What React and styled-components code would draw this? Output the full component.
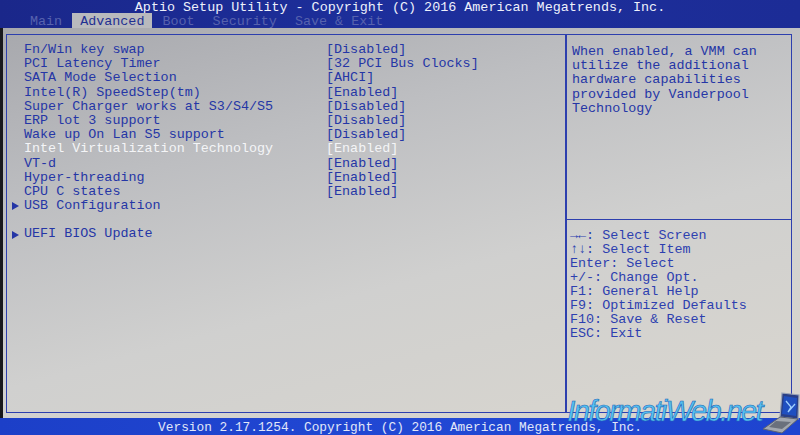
import React from "react";
import styled, { createGlobalStyle } from "styled-components";

const GlobalStyle = createGlobalStyle`
  html, body {
    margin: 0;
    padding: 0;
    background: #1a1a1e;
  }
`;

const mono = `"Liberation Mono", "DejaVu Sans Mono", monospace`;

const Screen = styled.div`
  position: relative;
  width: 800px;
  height: 435px;
  overflow: hidden;
  display: flex;
  flex-direction: column;
  font-family: ${mono};
  font-size: 13.4px;
`;

const TitleBar = styled.div`
  height: 28px;
  background: linear-gradient(90deg, #1a278a 0%, #1d2f9c 50%, #1c2c96 100%);
  display: flex;
  flex-direction: column;
`;

const Title = styled.div`
  height: 13px;
  line-height: 16px;
  text-align: center;
  color: #eef1fb;
  white-space: pre;
`;

const TabRow = styled.div`
  display: flex;
  height: 15px;
  padding-left: 22px;
  gap: 2px;
`;

const Tab = styled.div`
  padding: 0 8px;
  line-height: 17px;
  white-space: pre;
  color: ${(p) => (p.$active ? "#1f2f92" : "#5762ae")};
  background: ${(p) => (p.$active ? "#b9babd" : "transparent")};
`;

const Body = styled.div`
  flex: 1;
  display: flex;
  padding: 6px 8px 5px 3px;
  border-left: 3px solid #18181c;
  background: linear-gradient(165deg, #a7a8ad 0%, #bdbec1 30%, #d0d0cf 60%, #d9d6cf 100%);
`;

const Frame = styled.div`
  flex: 1;
  display: grid;
  grid-template-columns: 558px 1fr;
  border: 1px solid #2d3fae;
`;

const MainPanel = styled.div`
  padding: 8px 0 0 3px;
`;

const Row = styled.div`
  display: grid;
  grid-template-columns: 14px 302px auto;
  align-items: center;
  height: 14.2px;
  line-height: 14.2px;
  white-space: pre;
  color: ${(p) => (p.$selected ? "#f4f5f7" : "#2536a6")};
`;

const Marker = styled.span`
  width: 0;
  height: 0;
  margin-left: 2px;
  border-top: 4px solid transparent;
  border-bottom: 4px solid transparent;
  border-left: 7px solid #2536a6;
`;

const Gap = styled.div`
  height: 14.2px;
`;

const SidePanel = styled.div`
  display: flex;
  flex-direction: column;
  border-left: 2px solid #2d3fae;
`;

const HelpText = styled.div`
  height: 185px;
  padding: 10px 0 0 5px;
  box-sizing: border-box;
  border-bottom: 1px solid #2d3fae;
  color: #2536a6;
  line-height: 14.2px;
  white-space: pre;
`;

const KeyHelp = styled.div`
  padding: 9px 0 0 3px;
  color: #2d3fb0;
  line-height: 14px;
  white-space: pre;
`;

const Footer = styled.div`
  height: 17px;
  line-height: 19px;
  text-align: center;
  font-size: 12.8px;
  color: #e2e7f8;
  background: linear-gradient(90deg, #1c3fc8 0%, #2148d4 50%, #1e44d0 100%);
  white-space: pre;
`;

const Watermark = styled.div`
  position: absolute;
  right: 0;
  bottom: 1px;
  display: flex;
  align-items: flex-end;
  gap: 0;
`;

const WatermarkText = styled.span`
  font-family: "Liberation Sans", Arial, sans-serif;
  font-style: italic;
  font-size: 29px;
  letter-spacing: -1.6px;
  line-height: 30px;
  margin-bottom: 8px;
  color: #55c3f2;
  -webkit-text-stroke: 0.6px #1f66b8;
`;

const Laptop = () => (
  <svg width="38" height="42" viewBox="0 0 38 42">
    {/* screen lid */}
    <polygon points="20,1 37,3 36,27 18,25" fill="#2a3f86" stroke="#9aa4b8" strokeWidth="1.2" />
    <polygon points="22,4 35,6 34,24 20,22" fill="#1f4fc0" />
    <path d="M24 9 L29 15 L26 20 L33 12" stroke="#9fd0ff" strokeWidth="1.3" fill="none" />
    {/* base */}
    <polygon points="18,25 36,27 20,41 1,37" fill="#a3a8b0" stroke="#5d6370" strokeWidth="1" />
    <polygon points="14,29 29,30 20,37 7,35" fill="#6a707c" />
  </svg>
);

const items = [
  { label: "Fn/Win key swap", value: "[Disabled]" },
  { label: "PCI Latency Timer", value: "[32 PCI Bus Clocks]" },
  { label: "SATA Mode Selection", value: "[AHCI]" },
  { label: "Intel(R) SpeedStep(tm)", value: "[Enabled]" },
  { label: "Super Charger works at S3/S4/S5", value: "[Disabled]" },
  { label: "ERP lot 3 support", value: "[Disabled]" },
  { label: "Wake up On Lan S5 support", value: "[Disabled]" },
  { label: "Intel Virtualization Technology", value: "[Enabled]", selected: true },
  { label: "VT-d", value: "[Enabled]" },
  { label: "Hyper-threading", value: "[Enabled]" },
  { label: "CPU C states", value: "[Enabled]" },
  { label: "USB Configuration", submenu: true },
  { gap: true },
  { label: "UEFI BIOS Update", submenu: true },
];

const help = [
  "When enabled, a VMM can",
  "utilize the additional",
  "hardware capabilities",
  "provided by Vanderpool",
  "Technology",
];

const keys = [
  "→←: Select Screen",
  "↑↓: Select Item",
  "Enter: Select",
  "+/-: Change Opt.",
  "F1: General Help",
  "F9: Optimized Defaults",
  "F10: Save & Reset",
  "ESC: Exit",
];

const tabs = ["Main", "Advanced", "Boot", "Security", "Save & Exit"];

export default function App() {
  return (
    <>
      <GlobalStyle />
      <Screen>
        <TitleBar>
          <Title>Aptio Setup Utility - Copyright (C) 2016 American Megatrends, Inc.</Title>
          <TabRow>
            {tabs.map((t) => (
              <Tab key={t} $active={t === "Advanced"}>
                {t}
              </Tab>
            ))}
          </TabRow>
        </TitleBar>
        <Body>
          <Frame>
            <MainPanel>
              {items.map((it, i) =>
                it.gap ? (
                  <Gap key={i} />
                ) : (
                  <Row key={i} $selected={it.selected}>
                    {it.submenu ? <Marker /> : <span />}
                    <span>{it.label}</span>
                    <span>{it.value || ""}</span>
                  </Row>
                )
              )}
            </MainPanel>
            <SidePanel>
              <HelpText>{help.join("\n")}</HelpText>
              <KeyHelp>{keys.join("\n")}</KeyHelp>
            </SidePanel>
          </Frame>
        </Body>
        <Footer>Version 2.17.1254. Copyright (C) 2016 American Megatrends, Inc.</Footer>
        <Watermark>
          <WatermarkText>InformatiWeb.net</WatermarkText>
          <Laptop />
        </Watermark>
      </Screen>
    </>
  );
}
